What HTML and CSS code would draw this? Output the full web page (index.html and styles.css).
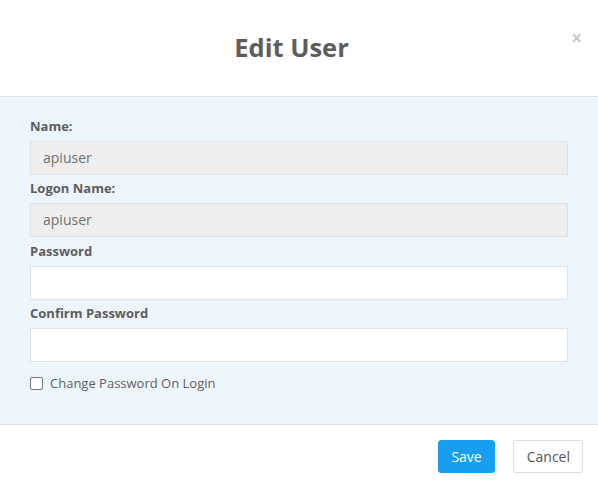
FILE: index.html
```html
<!DOCTYPE html>
<html>
<head>
<meta charset="utf-8">
<link rel="stylesheet" href="styles.css">
</head>
<body>
<div class="modal">
  <div class="modal-header">
    <h1 class="modal-title">Edit User</h1>
    <span class="close">&times;</span>
  </div>
  <div class="modal-body">
    <div class="field">
      <label class="label">Name:</label>
      <div class="input readonly">apiuser</div>
    </div>
    <div class="field field-tall">
      <label class="label">Logon Name:</label>
      <div class="input readonly">apiuser</div>
    </div>
    <div class="field">
      <label class="label">Password</label>
      <div class="input"></div>
    </div>
    <div class="field">
      <label class="label">Confirm Password</label>
      <div class="input"></div>
    </div>
    <div class="check-row">
      <span class="checkbox"></span>
      <span class="check-label">Change Password On Login</span>
    </div>
  </div>
  <div class="modal-footer">
    <button class="btn btn-primary">Save</button>
    <button class="btn btn-default">Cancel</button>
  </div>
</div>
</body>
</html>
```

FILE: styles.css
```css
html, body {
  margin: 0;
  padding: 0;
  background: #ffffff;
}
body {
  font-family: "Open Sans", "Liberation Sans", sans-serif;
  color: #555555;
}
.modal {
  width: 598px;
  height: 488px;
  display: flex;
  flex-direction: column;
}
.modal-header {
  position: relative;
  height: 96px;
  border-bottom: 1px solid #e1e1e1;
  display: flex;
  align-items: center;
  justify-content: center;
}
.modal-title {
  margin: 0 0 2px -15px;
  font-size: 25.5px;
  font-weight: 700;
  color: #5d5d5d;
}
.close {
  position: absolute;
  right: 16px;
  top: 26px;
  font-size: 19px;
  font-weight: 700;
  color: #c8c8c8;
  line-height: 24px;
}
.modal-body {
  background: #eef6fd;
  padding: 20px 30px 0 30px;
  height: 307px;
  border-bottom: 1px solid #e1e1e1;
}
.field {
  margin-bottom: 4px;
}
.field-tall {
  margin-bottom: 5px;
}
.label {
  display: block;
  font-size: 13px;
  font-weight: 700;
  line-height: 18px;
  margin-bottom: 6px;
  color: #5d5d5d;
}
.input {
  box-sizing: border-box;
  height: 34px;
  border: 1px solid #dfe3e6;
  background: #ffffff;
  padding: 0 12px;
  font-size: 14px;
  line-height: 32px;
  color: #707070;
}
.input.readonly {
  background: #eeeeee;
}
.check-row {
  display: flex;
  align-items: center;
  margin-top: 12px;
}
.checkbox {
  box-sizing: border-box;
  width: 13px;
  height: 13px;
  border: 1px solid #767676;
  border-radius: 2px;
  background: #fff;
  margin-right: 7px;
}
.check-label {
  font-size: 13px;
  color: #606060;
  line-height: 18px;
}
.modal-footer {
  display: flex;
  justify-content: flex-end;
  align-items: flex-start;
  padding: 15px 15px 0 0;
  gap: 18px;
}
.btn {
  font-family: "Open Sans", "Liberation Sans", sans-serif;
  font-size: 14px;
  height: 33px;
  border-radius: 3px;
  padding: 0 12px;
  margin: 0;
  cursor: pointer;
}
.btn-primary {
  background: #189ef0;
  border: 1px solid #189ef0;
  color: #ffffff;
}
.btn-default {
  background: #ffffff;
  border: 1px solid #dddddd;
  color: #555555;
  padding: 0 12px 0 13px;
}
```
